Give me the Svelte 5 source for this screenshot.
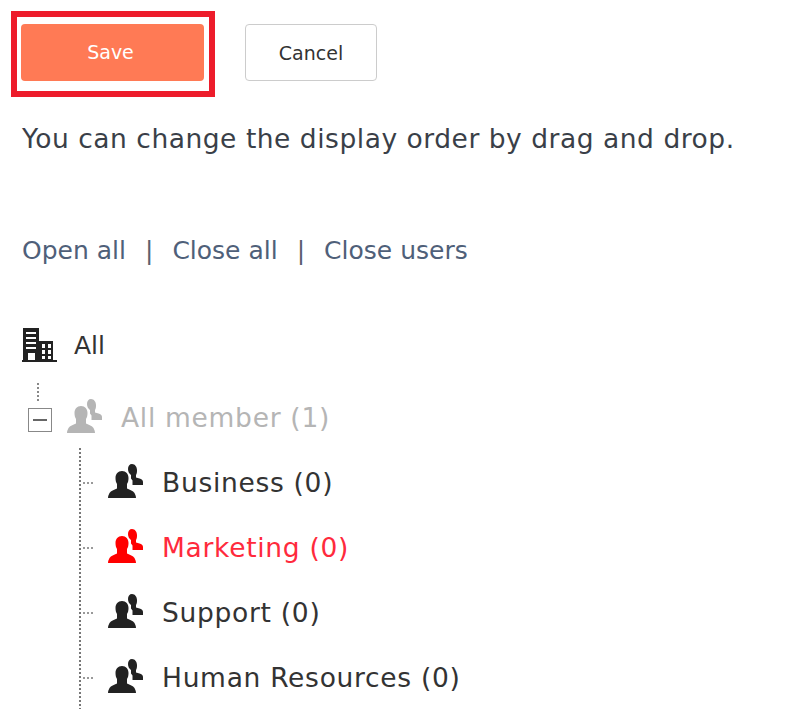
<script>
  const groups = [
    { name: 'Business (0)' },
    { name: 'Marketing (0)', active: true },
    { name: 'Support (0)' },
    { name: 'Human Resources (0)' }
  ]
</script>

{#snippet people()}
  <svg class="people" viewBox="0 0 35 34" width="35" height="34" fill="currentColor">
    <path d="M14 7c-4 0-6.500 3-6.500 7 0 2.500.5 4.500 1.500 6v4.500c-3 1.500-6 2-7.500 4.500C.8 30.500 0 32 0 34h28c0-2-.8-3.500-1.500-5-1.500-2.500-4.500-3-7.500-4.500V20c1-1.500 1.500-3.500 1.500-6 0-4-2.500-7-6.500-7z" />
    <path d="M24 0c-2.500 0-4 2-4 5 0 2.500 1 4.500 3 6v3.500l1.500 2V21H35v-3c0-2-1.500-3-3.500-3.500L28 13.500V11c1-1.500 1-3.500 1-5 0-3-2-6-5-6z" />
  </svg>
{/snippet}

<main class="page">
  <div class="actions">
    <div class="highlight">
      <button class="btn save">Save</button>
    </div>
    <button class="btn cancel">Cancel</button>
  </div>

  <p class="hint">You can change the display order by drag and drop.</p>

  <nav class="links">
    <a href="#open">Open all</a>
    <span class="sep">|</span>
    <a href="#close">Close all</a>
    <span class="sep">|</span>
    <a href="#users">Close users</a>
  </nav>

  <div class="tree">
    <div class="root">
      <svg class="building" viewBox="0 0 35 34" width="35" height="34">
        <path fill="#222" d="M1 0h16v13h14v19h4v2H0v-2h1z" />
        <path fill="#fff" d="M4 4h10v2H4zM4 9h10v2H4zM4 14h10v2H4zM4 19h10v2H4zM6 25h7v7H6zM20 16h3v4h-3zM26 16h3v4h-3zM20 22h3v4h-3zM26 22h3v4h-3zM20 28h3v3h-3zM26 28h3v3h-3z" />
      </svg>
      <span>All</span>
    </div>

    <div class="stub"></div>
    <div class="parent">
      <span class="toggle"><span></span></span>
      {@render people()}
      <span>All member (1)</span>
    </div>

    <ul class="children">
      {#each groups as group}
        <li class:active={group.active}>
          <span class="tick"></span>
          {@render people()}
          <span>{group.name}</span>
        </li>
      {/each}
    </ul>
  </div>
</main>

<style>
  :global(body) {
    background: #fff;
  }

  .page {
    height: 709px;
    overflow: hidden;
    box-sizing: border-box;
    padding: 11px 0 0 11px;
    font-family: 'DejaVu Sans', sans-serif;
    font-size: 25px;
    color: #333;
  }

  .actions {
    display: flex;
    align-items: flex-start;
    gap: 30px;
  }

  .highlight {
    box-sizing: border-box;
    width: 204px;
    height: 86px;
    border: 6px solid #ed1c2b;
    padding: 7px 4px;
  }

  .btn {
    display: block;
    box-sizing: border-box;
    height: 57px;
    border-radius: 4px;
    font-family: inherit;
    font-size: 19px;
  }

  .save {
    width: 183px;
    padding: 0 4px 2px 0;
    border: none;
    background: #ff7a55;
    color: #fff;
  }

  .cancel {
    width: 132px;
    margin-top: 13px;
    border: 1px solid #ccc;
    background: #fff;
    color: #333;
  }

  .hint {
    margin: 22px 0 0 11px;
    font-size: 26.5px;
    letter-spacing: 0.52px;
    line-height: 40px;
    white-space: nowrap;
    color: #3a3f48;
  }

  .links {
    margin: 72px 0 0 11px;
    display: flex;
    gap: 19px;
    font-size: 25px;
    line-height: 40px;
  }

  .links a {
    color: #4f6079;
    text-decoration: none;
  }

  .sep {
    color: #5a5f6e;
  }

  .tree {
    margin: 54px 0 0 11px;
  }

  .root,
  .parent,
  li {
    display: flex;
    align-items: center;
  }

  .root {
    height: 40px;
    gap: 17px;
  }

  .stub {
    margin: 18px 0 0 15px;
    height: 18px;
    border-left: 2px dotted #888;
  }

  .parent,
  li {
    font-size: 26.5px;
    letter-spacing: 0.7px;
  }

  .parent {
    height: 38px;
    margin-top: -3px;
    color: #b5b5b5;
  }

  .toggle {
    box-sizing: border-box;
    width: 24px;
    height: 24px;
    margin: 5px 15px 0 6px;
    border: 1px solid #888;
    display: flex;
    align-items: center;
    justify-content: center;
  }

  .toggle span {
    width: 14px;
    height: 2px;
    background: #666;
  }

  .parent .people {
    margin: -2px 19px 0 0;
  }

  .children {
    list-style: none;
    margin: 12px 0 0 57px;
    padding: 2px 0 0;
    height: 280px;
    border-left: 2px dotted #777;
  }

  li {
    height: 65px;
  }

  li.active {
    color: #ff2a3c;
  }

  li.active .people {
    color: #f00;
  }

  .tick {
    width: 10px;
    margin-left: 2px;
    border-top: 2px dotted #999;
  }

  li .people {
    flex: none;
    margin: -4px 19px 0 15px;
    color: #222;
  }
</style>
